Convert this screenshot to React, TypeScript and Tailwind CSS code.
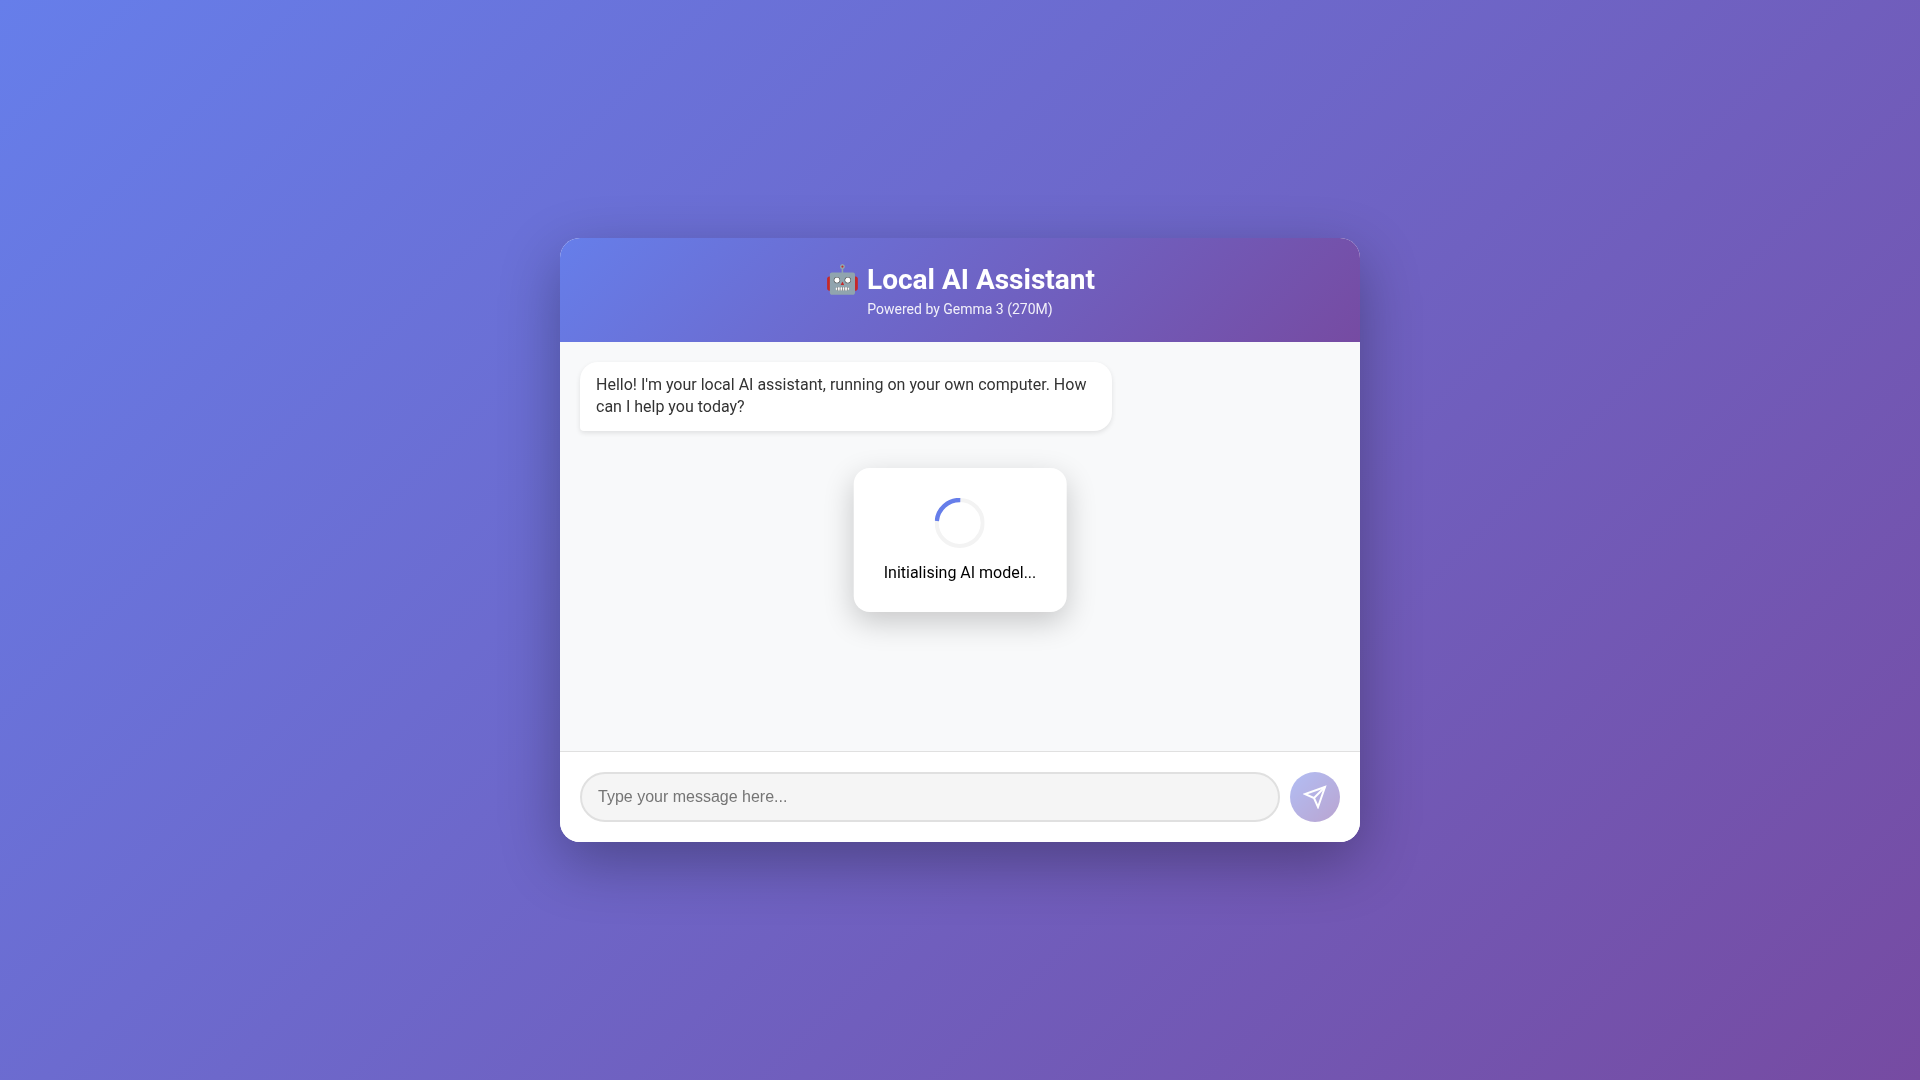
export default function App() {
  return (
    <div className="flex h-screen items-center justify-center bg-[linear-gradient(135deg,#667eea_0%,#764ba2_100%)] font-['Roboto',sans-serif]">
      <div className="relative flex h-[604px] w-[800px] flex-col overflow-hidden rounded-[20px] bg-white shadow-[0_20px_60px_rgba(0,0,0,0.3)] will-change-transform">
        <div className="bg-[linear-gradient(135deg,#667eea_0%,#764ba2_100%)] px-5 py-[25px] text-center text-white">
          <h1 className="mb-[5px] text-[28px] leading-[33px] font-bold">🤖 Local AI Assistant</h1>
          <p className="text-sm leading-[16px] opacity-90">Powered by Gemma 3 (270M)</p>
        </div>
        <div className="flex flex-1 flex-col bg-[#f8f9fa] p-5">
          <div className="w-fit max-w-[70%] rounded-[18px] rounded-bl-[4px] bg-white px-4 py-3 text-base leading-[22.4px] text-[#333] shadow-[0_2px_5px_rgba(0,0,0,0.1)]">
            Hello! I'm your local AI assistant, running on your own computer. How can I help you today?
          </div>
        </div>
        <div className="flex items-center gap-2.5 border-t border-[#e0e0e0] bg-white p-5">
          <input
            disabled
            placeholder="Type your message here..."
            className="h-[50px] flex-1 rounded-[25px] border-2 border-[#e0e0e0] bg-[#f5f5f5] px-4 py-3 font-['Liberation_Sans',sans-serif] text-base placeholder:text-[#757575]"
          />
          <button disabled className="flex h-[50px] w-[50px] items-center justify-center rounded-full bg-[linear-gradient(135deg,#667eea_0%,#764ba2_100%)] opacity-50">
            <svg width="24" height="24" viewBox="0 0 24 24" fill="none" stroke="white" strokeWidth="2" strokeLinejoin="miter">
              <path d="M22 2 15 22 11 13 2 9 22 2Z" />
              <path d="M11 13 22 2" />
            </svg>
          </button>
        </div>
        <div className="absolute top-1/2 left-1/2 flex -translate-x-1/2 -translate-y-1/2 flex-col items-center rounded-2xl bg-white p-[30px] shadow-[0_10px_30px_rgba(0,0,0,0.2)]">
          <svg className="mb-[15px]" width="50" height="50" viewBox="0 0 50 50" fill="none">
            <circle cx="25" cy="25" r="23" stroke="#f3f3f3" strokeWidth="4" />
            <path d="M2.09 23A23 23 0 0 1 25.6 2.01" stroke="#667eea" strokeWidth="4.4" />
          </svg>
          <p className="text-base leading-[19px] text-black">Initialising AI model...</p>
        </div>
      </div>
    </div>
  );
}
